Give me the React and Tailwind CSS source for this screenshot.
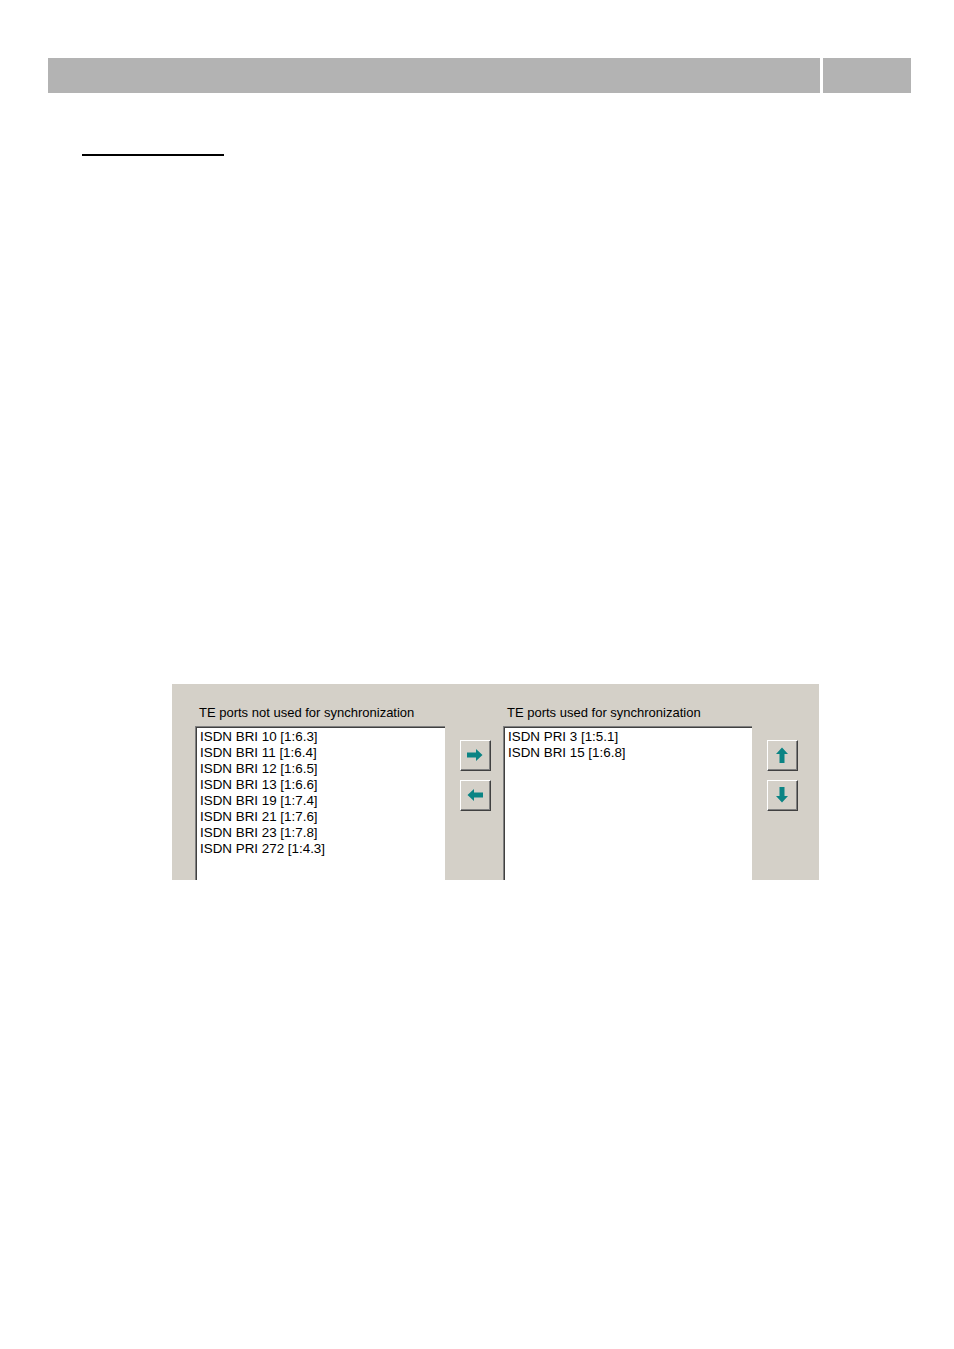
const leftItems = [
  'ISDN BRI 10 [1:6.3]',
  'ISDN BRI 11 [1:6.4]',
  'ISDN BRI 12 [1:6.5]',
  'ISDN BRI 13 [1:6.6]',
  'ISDN BRI 19 [1:7.4]',
  'ISDN BRI 21 [1:7.6]',
  'ISDN BRI 23 [1:7.8]',
  'ISDN PRI 272 [1:4.3]',
]

const rightItems = ['ISDN PRI 3 [1:5.1]', 'ISDN BRI 15 [1:6.8]']

// teal arrow, drawn pointing right and rotated for the other directions
function Arrow({ dir }) {
  const rot = { right: '', left: 'rotate-180', up: '-rotate-90', down: 'rotate-90' }[dir]
  return (
    <svg width="16" height="12" viewBox="0 0 16 12" className={rot}>
      <path d="M0 3.5 H9 V0 L15.5 6 L9 12 V8.5 H0 Z" fill="#0b8484" />
    </svg>
  )
}

function WinButton({ dir }) {
  return (
    <div className="w-[31px] h-[31px] border-t border-l border-r border-b border-t-white border-l-white border-r-[#404040] border-b-[#404040] bg-[#d4d0c8]">
      <div className="w-full h-full flex items-center justify-center border-r border-b border-r-[#808080] border-b-[#808080]">
        <Arrow dir={dir} />
      </div>
    </div>
  )
}

function ListBox({ label, items, width }) {
  return (
    <div className={`flex flex-col ${width}`}>
      <div className="text-[13px] leading-[14px] text-black pl-[4px] h-[16px] font-['Liberation_Sans',sans-serif]">
        {label}
      </div>
      <div className="mt-[4px] h-[154px] border-t border-l border-t-[#808080] border-l-[#808080]">
        <div className="h-full bg-white border-t border-l border-t-[#404040] border-l-[#404040] pl-[3px] pt-[1px]">
          {items.map(item => (
            <div key={item} className="text-[13.4px] leading-[16px] text-black font-['Liberation_Sans',sans-serif] whitespace-nowrap">
              {item}
            </div>
          ))}
        </div>
      </div>
    </div>
  )
}

export default function App() {
  return (
    <div className="w-[954px] h-[1349px] bg-white relative overflow-hidden">
      {/* Header bar */}
      <div className="flex gap-[3px] pt-[58px] pl-[48px]">
        <div className="w-[772px] h-[35px] bg-[#b3b3b3]" />
        <div className="w-[88px] h-[35px] bg-[#b3b3b3]" />
      </div>

      {/* Heading underline */}
      <div className="ml-[82px] mt-[61px] w-[142px] h-[2px] bg-black" />

      {/* Dialog excerpt */}
      <div className="ml-[172px] mt-[528px] w-[647px] h-[196px] bg-[#d4d0c8] overflow-hidden flex pl-[23px] pt-[22px]">
        <ListBox label="TE ports not used for synchronization" items={leftItems} width="w-[250px]" />
        <div className="ml-[15px] mt-[34px] flex flex-col gap-[9px]">
          <WinButton dir="right" />
          <WinButton dir="left" />
        </div>
        <div className="ml-[12px]">
          <ListBox label="TE ports used for synchronization" items={rightItems} width="w-[249px]" />
        </div>
        <div className="ml-[15px] mt-[34px] flex flex-col gap-[9px]">
          <WinButton dir="up" />
          <WinButton dir="down" />
        </div>
      </div>
    </div>
  )
}
